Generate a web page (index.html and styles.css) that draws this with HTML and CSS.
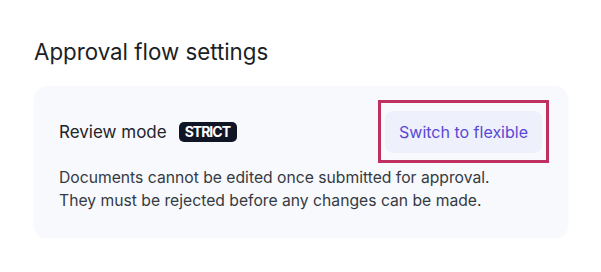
FILE: index.html
```html
<!DOCTYPE html>
<html>
<head>
<meta charset="utf-8">
<link rel="stylesheet" href="styles.css">
</head>
<body>
<div class="page">
  <h2 class="title">Approval flow settings</h2>
  <section class="card">
    <div class="card-head">
      <div class="label">
        <span class="label-text">Review mode</span>
        <span class="badge">STRICT</span>
      </div>
      <span class="highlight"><button class="switch-btn">Switch to flexible</button></span>
    </div>
    <p class="desc">Documents cannot be edited once submitted for approval.<br>They must be rejected before any changes can be made.</p>
  </section>
</div>
</body>
</html>
```
FILE: styles.css
```css
html, body {
  margin: 0;
  background: #ffffff;
}
body {
  font-family: "Inter", "Liberation Sans", sans-serif;
  color: #1f2329;
}
.page {
  padding: 38px 33px 0 34px;
}
.title {
  margin: 0;
  font-size: 22.3px;
  font-weight: 400;
  line-height: 28px;
  color: #1c1f26;
}
.card {
  margin-top: 20px;
  background: #f7f9fc;
  border-radius: 14px;
  box-shadow: 0 1px 3px rgba(30, 40, 60, 0.03);
  padding: 14px 19px 26px 25px;
}
.card-head {
  display: flex;
  align-items: center;
  justify-content: space-between;
}
.label {
  display: flex;
  align-items: center;
  gap: 12px;
}
.label-text {
  font-size: 17px;
  color: #1f232a;
}
.badge {
  background: #111626;
  color: #ffffff;
  font-size: 14px;
  font-weight: 700;
  letter-spacing: -1px;
  padding: 2px 7px 2px 6px;
  line-height: 16px;
  border-radius: 5px;
}
.highlight {
  display: flex;
  border: 3px solid #c0305e;
  padding: 8px 4px 7px 4px;
}
.switch-btn {
  font-family: inherit;
  font-size: 16px;
  color: #5848d4;
  background: #eef0fc;
  border: none;
  border-radius: 8px;
  padding: 10px 14px;
  line-height: 22px;
}
.desc {
  margin: 3px 0 0 0;
  font-size: 15.7px;
  line-height: 23px;
  color: #353a42;
}
```
